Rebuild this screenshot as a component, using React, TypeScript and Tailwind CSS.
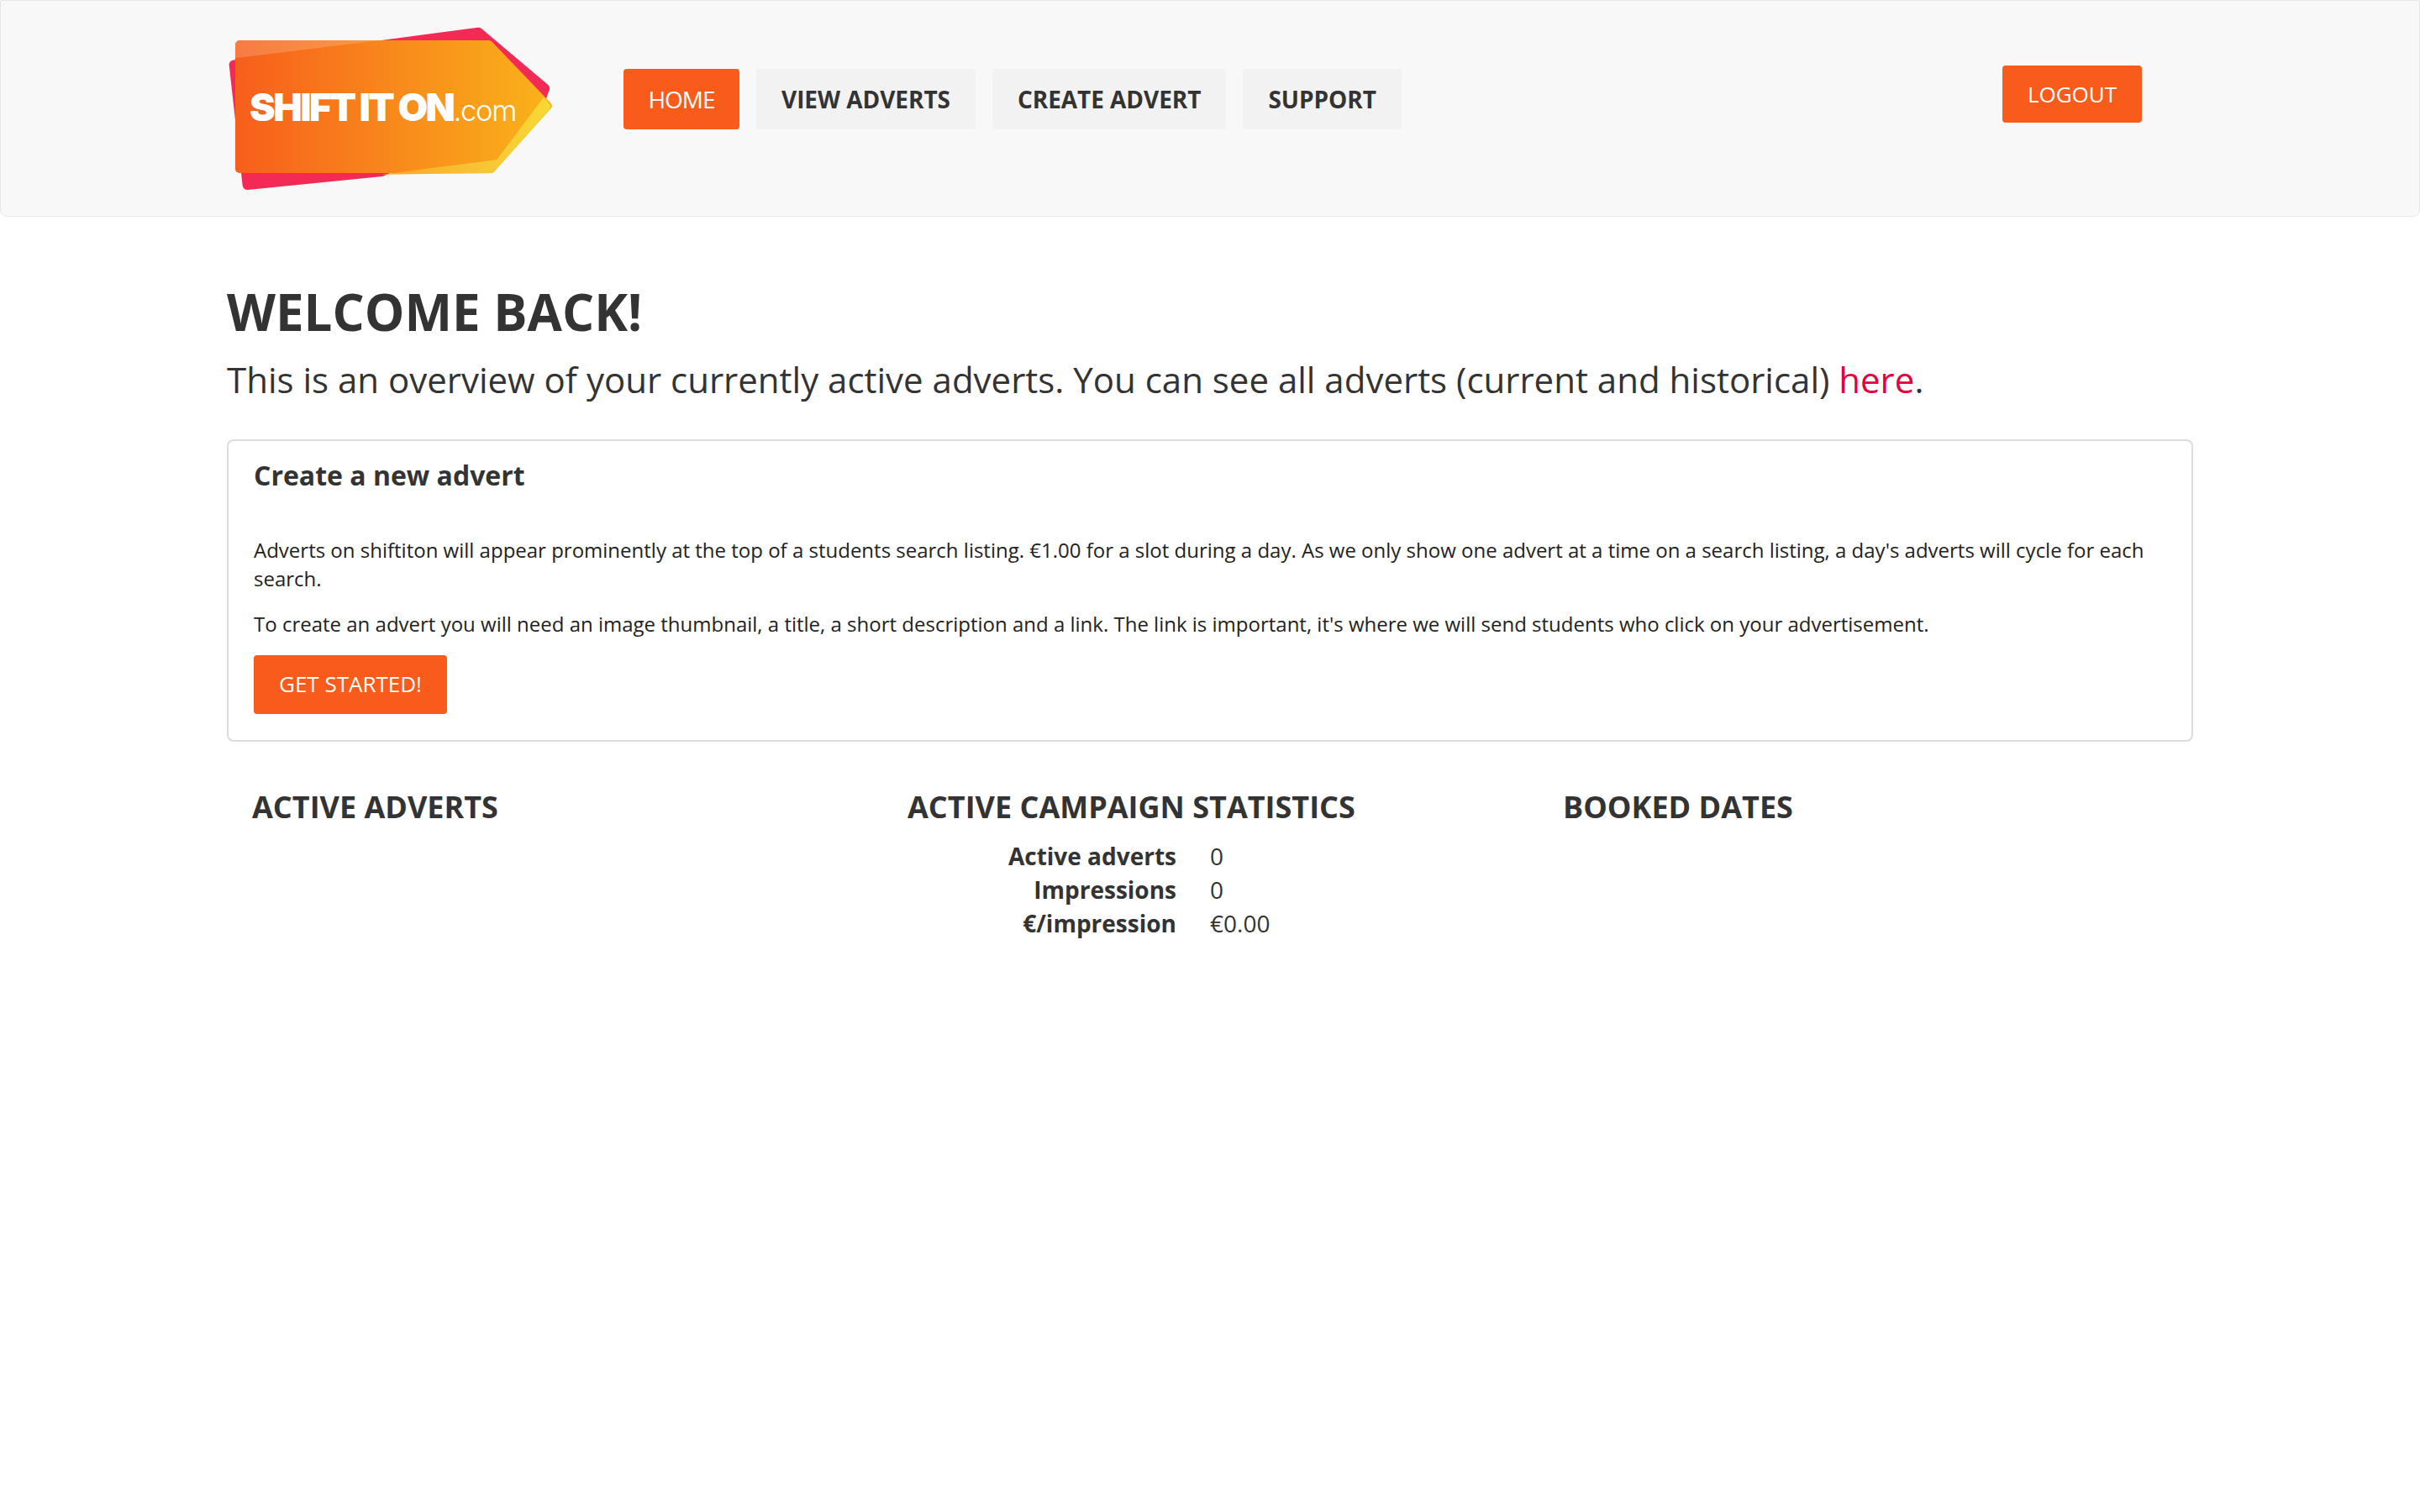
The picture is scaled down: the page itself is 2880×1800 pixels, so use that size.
import React from 'react';

const font = { fontFamily: '"Open Sans", "Noto Sans", sans-serif' };
const logoFont = { fontFamily: 'Inter, "Open Sans", sans-serif' };

// logo traced from the reference, coordinates are 3x page pixels
const Logo = () => (
    <svg width="420" height="230" viewBox="60 60 1260 690" className="shrink-0 mt-[20px]">
        <defs>
            <linearGradient id="tag" x1="115" y1="0" x2="1240" y2="0" gradientUnits="userSpaceOnUse">
                <stop offset="0" stopColor="#f75e1c" />
                <stop offset="1" stopColor="#f9b31a" />
            </linearGradient>
            <linearGradient id="wedge" x1="640" y1="0" x2="1240" y2="0" gradientUnits="userSpaceOnUse">
                <stop offset="0" stopColor="#f8a726" />
                <stop offset="0.6" stopColor="#f7c535" />
                <stop offset="1" stopColor="#f8d934" />
            </linearGradient>
            <filter id="soft" x="-5%" y="-5%" width="110%" height="110%">
                <feGaussianBlur stdDeviation="5" />
            </filter>
        </defs>
        <path d="M112 228 L985 112 L1222 312 L1205 360 L640 610 L160 658 Z" fill="#f32a55" stroke="#f32a55" strokeWidth="34" strokeLinejoin="round" />
        <path d="M132 156 H1022 L1232 375 L1030 608 H132 Z" fill="#8a2a20" opacity="0.55" filter="url(#soft)" />
        <path d="M132 156 H1022 L1232 375 L1030 600 H132 Z" fill="url(#tag)" stroke="url(#tag)" strokeWidth="30" strokeLinejoin="round" />
        <path d="M117 205 L117 158 Q117 140 135 140 L640 140 Z" fill="#ffffff" opacity="0.18" />
        <path d="M1218 345 L1236 365 Q1248 376 1236 390 L1045 606 Q1035 616 1020 616 L640 620 L1050 568 Z" fill="url(#wedge)" />
        <text x="168" y="428" fontSize="138" fontWeight="900" fill="#ffffff" letterSpacing="-7.5" wordSpacing="-2" style={logoFont}>
            SHIFT IT ON<tspan fontSize="104" fontWeight="300" letterSpacing="-4">.com</tspan>
        </text>
    </svg>
);

const NavItem = ({ label, active }: { label: string; active?: boolean }) => (
    <a className={active
        ? 'h-[72px] w-[138px] flex items-center justify-center rounded-[4px] bg-[#f95b1a] text-white text-[28px] tracking-[-1px] font-normal'
        : 'h-[72px] w-auto px-[30px] flex items-center rounded-[4px] bg-[#f2f2f2] text-[#333333] text-[28px] font-bold tracking-[-0.05px]'}>
        {label}
    </a>
);

const Stat = ({ label, value }: { label: string; value: string }) => (
    <div className="flex h-[40px] items-center text-[28px]">
        <div className="w-[319px] text-right font-bold">{label}</div>
        <div className="ml-[40px]">{value}</div>
    </div>
);

const App = () => {
    return (
        <div className="min-h-[1800px] bg-white text-[#333333]" style={font}>
            <header className="h-[258px] flex items-start pl-[260px] pr-[330px] bg-[#f8f8f8] border border-[#e7e7e7] rounded-b-[8px] rounded-t-[2px]">
                <Logo />
                <nav className="flex gap-[20px] ml-[61px] mt-[81px]">
                    <NavItem label="HOME" active />
                    <NavItem label="VIEW ADVERTS" />
                    <NavItem label="CREATE ADVERT" />
                    <NavItem label="SUPPORT" />
                </nav>
                <a className="ml-auto mt-[77px] h-[68px] w-[166px] flex items-center justify-center rounded-[4px] bg-[#f95b1a] text-white text-[26px]">LOGOUT</a>
            </header>

            <main className="px-[270px]">
                <h1 className="mt-[78px] text-[60px] leading-[70px] font-bold">WELCOME BACK!</h1>
                <p className="mt-[18px] text-[42px] leading-[56px]">
                    This is an overview of your currently active adverts. You can see all adverts (current and historical) <a className="text-[#e8003d]">here</a>.
                </p>

                <section className="mt-[43px] h-[360px] border-2 border-[#dddddd] rounded-[8px] px-[30px] pt-[18px]">
                    <h3 className="text-[32px] leading-[46px] font-bold">Create a new advert</h3>
                    <p className="mt-[49px] text-[24px] leading-[34px] text-[#222222]">
                        Adverts on shiftiton will appear prominently at the top of a students search listing. €1.00 for a slot during a day. As we only show one advert at a time on a search listing, a day's adverts will cycle for each search.
                    </p>
                    <p className="mt-[20px] text-[24px] leading-[34px] text-[#222222]">
                        To create an advert you will need an image thumbnail, a title, a short description and a link. The link is important, it's where we will send students who click on your advertisement.
                    </p>
                    <a className="mt-[20px] w-[230px] h-[70px] pb-[2px] flex items-center justify-center rounded-[4px] bg-[#f95b1a] text-white text-[26px] font-medium">GET STARTED!</a>
                </section>

                <div className="grid grid-cols-[780px_780px_780px] mt-[53px] pl-[30px] text-[36px] font-bold">
                    <h2 className="leading-[50px]">ACTIVE ADVERTS</h2>
                    <h2 className="leading-[50px]">ACTIVE CAMPAIGN STATISTICS</h2>
                    <h2 className="leading-[50px]">BOOKED DATES</h2>
                </div>
                <div className="pl-[811px] mt-[13px]">
                    <Stat label="Active adverts" value="0" />
                    <Stat label="Impressions" value="0" />
                    <Stat label="€/impression" value="€0.00" />
                </div>
            </main>
        </div>
    );
};

export default App;
